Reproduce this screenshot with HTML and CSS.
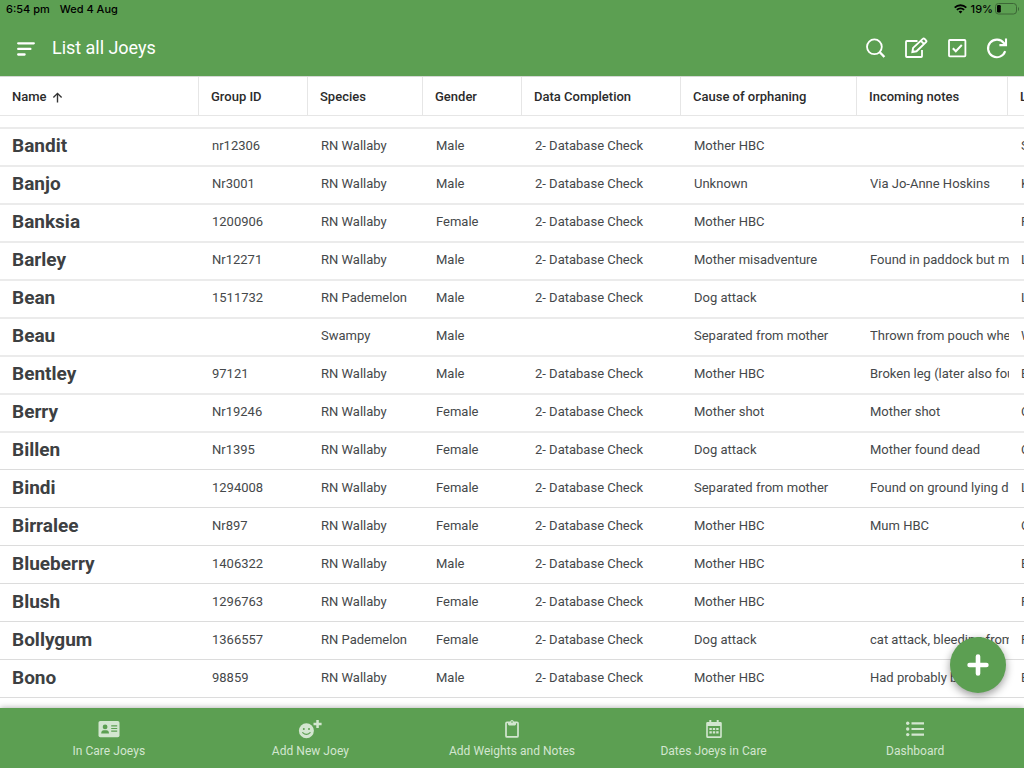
FILE: index.html
```html
<!DOCTYPE html>
<html lang="en">
<head>
  <meta charset="UTF-8">
  <title>List all Joeys</title>
  <meta name="viewport" content="width=device-width, initial-scale=1.0">
  <link rel="stylesheet" href="styles.css">
</head>
<body>

<!-- Status bar -->
<div class="status-bar">
  <span class="time">6:54 pm</span>
  <span class="date">Wed 4 Aug</span>
  <svg class="wifi" width="13" height="10" viewBox="0 0 13 10" fill="none" stroke="#000" stroke-width="1.8">
    <path d="M.7 3.6a8.3 8.3 0 0 1 11.6 0M2.9 5.9a5.1 5.1 0 0 1 7.2 0"/>
    <path d="M4.6 7.6a2.8 2.8 0 0 1 3.8 0L6.5 9.5z" fill="#000" stroke="none"/>
  </svg>
  <span class="percent">19%</span>
  <svg class="battery" width="25" height="12" viewBox="0 0 25 12">
    <rect x=".5" y=".5" width="21" height="10.5" rx="3" fill="none" stroke="#3c6636"/>
    <rect x="2" y="2" width="3.8" height="7.5" rx="1.2"/>
    <path d="M23 4v4c1.4-.6 1.4-3.4 0-4z" fill="#3c6636"/>
  </svg>
</div>

<!-- App bar -->
<div class="app-bar">
  <svg class="menu" width="18" height="14" viewBox="0 0 18 14" stroke="#fff" stroke-width="2.3" stroke-linecap="round">
    <path d="M1.2 1.3h15.6M1.2 6.9h12.2M1.2 12.5h6.4"/>
  </svg>
  <h1>List all Joeys</h1>
  <div class="actions">
    <svg width="24" height="24" viewBox="0 0 24 24"><circle cx="10.4" cy="10.8" r="7.4"/><path d="M15.6 16l4.8 5" stroke-width="2.4"/></svg>
    <svg width="24" height="24" viewBox="0 0 24 24"><path d="M13.5 5H2.8Q2 5 2 5.8v14.4q0 .8.8.8h14.4q.8 0 .8-.8V14"/><path d="M8.400 16l.7-4.100L18.800 2.900q.9-.9 1.800 0l1.400 1.400q.9.900 0 1.800l-9.500 9.200zM16.900 4.800l3.200 3.200" stroke-width="1.900"/></svg>
    <svg width="24" height="24" viewBox="0 0 24 24"><rect x="4" y="4" width="16.4" height="16.4" rx=".8"/><path d="M7.8 12.2l3 3 6-6.2" stroke-width="2"/></svg>
    <svg width="24" height="24" viewBox="0 0 24 24"><path d="M20.2 15.2a8.8 8.8 0 1 1-1.3-8.1l1.7 1.6M21 2.4v6.7h-6.6" stroke-width="2.1"/></svg>
  </div>
</div>

<!-- Joeys table -->
<div class="grid header-row">
  <div>Name
    <svg width="11" height="11" viewBox="0 0 12 12" fill="none" stroke="#333" stroke-width="1.5"><path d="M6 11.5V1.5M1.5 6L6 1.5 10.5 6"/></svg>
  </div>
  <div>Group ID</div>
  <div>Species</div>
  <div>Gender</div>
  <div>Data Completion</div>
  <div>Cause of orphaning</div>
  <div>Incoming notes</div>
  <div>L</div>
</div>
<div class="rows" id="rows"></div>

<button class="add-button" aria-label="Add">
  <svg width="22" height="22" viewBox="0 0 22 22" stroke="#fff" stroke-width="4.6" stroke-linecap="round"><path d="M11 2.6v16.8M2.6 11h16.8"/></svg>
</button>

<!-- Bottom navigation -->
<div class="bottom-nav">
  <div class="tab">
    <svg width="24" height="22" viewBox="0 0 24 22">
      <rect x="1.5" y="3" width="21" height="16.3" rx="1.8"/>
      <g fill="#5c9f52"><circle cx="8.1" cy="8.9" r="2.4"/><path d="M4.2 15.6c0-2.2 1.2-3.3 2.5-3.3h2.8c1.4 0 2.5 1.1 2.5 3.3zM14.2 7.3h6v1.2h-6zM14.2 9.9h6v1.2h-6zM14.2 12.5h6v1.2h-6z"/></g>
    </svg>
    In Care Joeys
  </div>
  <div class="tab">
    <svg width="24" height="22" viewBox="0 0 24 22">
      <circle cx="8.4" cy="12.8" r="7.5"/>
      <g fill="#5c9f52"><circle cx="5.8" cy="11" r="1"/><circle cx="11" cy="11" r="1"/></g>
      <path d="M4.7 14.6q3.7 3.6 7.4 0" fill="none" stroke="#5c9f52" stroke-width="1.2" stroke-linecap="round"/>
      <path d="M18.3 2h2.5v2.8h2.8v2.5h-2.8v2.8h-2.5V7.3h-2.8V4.8h2.8z"/>
    </svg>
    Add New Joey
  </div>
  <div class="tab">
    <svg width="24" height="22" viewBox="0 0 24 22">
      <rect x="6" y="4.3" width="12" height="14.6" rx="1" fill="none" stroke="#d3e6d0" stroke-width="1.7"/>
      <path d="M8 4h2.2q.2-2 1.8-2t1.8 2H16v2.6l-1 .8H9l-1-.8z"/><circle cx="12" cy="4" r=".8" fill="#5c9f52"/>
    </svg>
    Add Weights and Notes
  </div>
  <div class="tab">
    <svg width="24" height="22" viewBox="0 0 24 22">
      <path d="M7.3 2h2v2h5.4V2h2v2h1.8q1.3 0 1.3 1.3v13.1q0 1.5-1.5 1.5H5.7q-1.5 0-1.5-1.5V5.3Q4.2 4 5.5 4h1.8z"/>
      <path d="M5.8 8h12.4v10.3H5.8z" fill="#5c9f52"/>
      <path d="M7.4 9.9h2.4v2.2H7.4zM10.8 9.9h2.4v2.2h-2.4zM14.2 9.9h2.4v2.2h-2.4zM7.4 13.2h2.4v2.2H7.4zM10.8 13.2h2.4v2.2h-2.4zM14.2 13.2h2.4v2.2h-2.4z"/>
    </svg>
    Dates Joeys in Care
  </div>
  <div class="tab">
    <svg width="24" height="22" viewBox="0 0 24 22">
      <circle cx="4.7" cy="5.3" r="1.7"/><circle cx="4.7" cy="11" r="1.7"/><circle cx="4.7" cy="16.6" r="1.7"/>
      <path d="M8.5 4.2H21v2.2H8.5zM8.5 9.9H21v2.2H8.5zM8.5 15.5H21v2.2H8.5z"/>
    </svg>
    Dashboard
  </div>
</div>

<script>
const check = "2- Database Check";
const wallaby = "RN Wallaby";

const joeys = [
  ["Bandit", "nr12306", wallaby, "Male", check, "Mother HBC", "", "S"],
  ["Banjo", "Nr3001", wallaby, "Male", check, "Unknown", "Via Jo-Anne Hoskins", "K"],
  ["Banksia", "1200906", wallaby, "Female", check, "Mother HBC", "", "P"],
  ["Barley", "Nr12271", wallaby, "Male", check, "Mother misadventure", "Found in paddock but m", "L"],
  ["Bean", "1511732", "RN Pademelon", "Male", check, "Dog attack", "", "L"],
  ["Beau", "", "Swampy", "Male", "", "Separated from mother", "Thrown from pouch whe", "W"],
  ["Bentley", "97121", wallaby, "Male", check, "Mother HBC", "Broken leg (later also fou", "B"],
  ["Berry", "Nr19246", wallaby, "Female", check, "Mother shot", "Mother shot", "C"],
  ["Billen", "Nr1395", wallaby, "Female", check, "Dog attack", "Mother found dead", "C"],
  ["Bindi", "1294008", wallaby, "Female", check, "Separated from mother", "Found on ground lying d", "L"],
  ["Birralee", "Nr897", wallaby, "Female", check, "Mother HBC", "Mum HBC", "C"],
  ["Blueberry", "1406322", wallaby, "Male", check, "Mother HBC", "", "B"],
  ["Blush", "1296763", wallaby, "Female", check, "Mother HBC", "", "P"],
  ["Bollygum", "1366557", "RN Pademelon", "Female", check, "Dog attack", "cat attack, bleeding from", "P"],
  ["Bono", "98859", wallaby, "Male", check, "Mother HBC", "Had probably been on", "B"]
];

const rows = document.getElementById("rows");
joeys.forEach(joey => {
  const row = document.createElement("div");
  row.className = "grid row";
  joey.forEach(value => {
    const cell = document.createElement("div");
    cell.textContent = value;
    row.appendChild(cell);
  });
  rows.appendChild(row);
});
</script>

</body>
</html>
```

FILE: styles.css
```css
* {
  box-sizing: border-box;
}

body {
  margin: 0;
  width: 1024px;
  height: 768px;
  overflow: hidden;
  display: flex;
  flex-direction: column;
  font-family: Roboto, sans-serif;
  background-color: #fff;
}

.status-bar {
  height: 20px;
  display: flex;
  align-items: center;
  padding: 0 4px 2px 6px;
  background-color: #5c9f52;
  font-family: Inter, sans-serif;
  font-size: 11px;
  font-weight: 500;
  letter-spacing: 0;
  color: #000;
}

.date {
  margin-left: 10px;
}

.wifi {
  margin-left: auto;
}

.percent {
  margin: 0 2px 0 4px;
}

.app-bar {
  height: 56px;
  display: flex;
  align-items: center;
  padding: 0 15px 0 17px;
  background-color: #5c9f52;
}

.menu {
  margin-top: 2px;
}

.app-bar h1 {
  margin: 0 0 2px 17px;
  font-size: 18px;
  font-weight: 400;
  letter-spacing: -0.03px;
  color: #fff;
}

.actions {
  display: flex;
  gap: 16.5px;
  margin-left: auto;
}

.actions svg {
  fill: none;
  stroke: #fff;
  stroke-width: 1.8;
}

.grid {
  display: grid;
  grid-template-columns: 199px 109px 115px 99px 159px 176px 151px 60px;
}

.header-row {
  flex: none;
  height: 40px;
  border-top: 1px solid #d5d8d5;
  border-bottom: 1px solid #e6e6e6;
  font-size: 13px;
  font-weight: 500;
  line-height: 39px;
  color: #2b2b2b;
}

.header-row div {
  height: 38px;
  padding-left: 12px;
  border-right: 1px solid #e6e6e6;
}

.header-row svg {
  margin-left: 2px;
  vertical-align: -2px;
}

.rows {
  flex: 1;
  min-height: 0;
  padding-top: 11px;
  overflow: hidden;
}

.row {
  height: 38px;
  border-top: 2px solid #ebebeb;
  font-size: 13px;
  line-height: 34px;
  color: #45484a;
}

.row:nth-child(n+10) {
  border-top: 1px solid #dcdcdc;
  line-height: 36px;
}

.row:last-child {
  height: 39px;
  border-bottom: 1px solid #dcdcdc;
}

.row div {
  margin: 0 -1px 0 13px;
  overflow: hidden;
  white-space: nowrap;
}

.row div:first-child {
  margin-left: 12px;
  font-size: 19px;
  font-weight: 700;
  color: #3d4042;
}

.add-button {
  position: absolute;
  left: 950px;
  top: 637px;
  width: 56px;
  height: 56px;
  display: flex;
  align-items: center;
  justify-content: center;
  padding: 0;
  border: none;
  border-radius: 50%;
  background-color: #5c9f52;
  box-shadow: 0 3px 8px rgba(0,0,0,0.4);
}

.bottom-nav {
  flex: none;
  height: 60px;
  display: flex;
  padding: 0 8px;
  background-color: #5c9f52;
  box-shadow: 0 0 6px rgba(0,0,0,0.35);
}

.tab {
  flex: 1;
  display: flex;
  flex-direction: column;
  align-items: center;
  padding-top: 10px;
  font-size: 12px;
  letter-spacing: 0.04px;
  line-height: 23px;
  color: #d3e6d0;
}

.tab svg {
  fill: #d3e6d0;
}
```
